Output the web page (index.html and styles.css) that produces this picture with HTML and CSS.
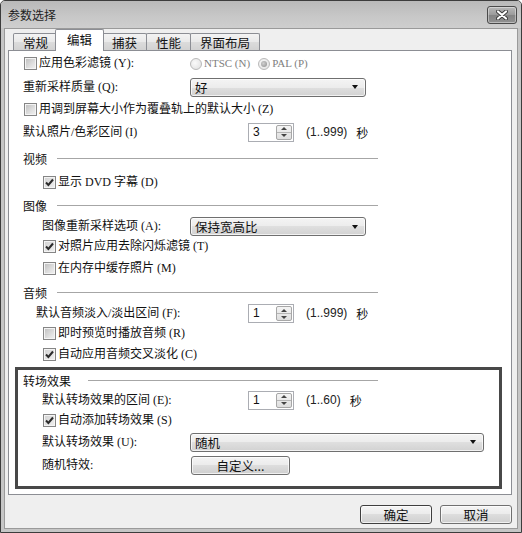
FILE: index.html
```html
<!DOCTYPE html>
<html lang="zh-CN">
<head>
<meta charset="utf-8">
<title>参数选择</title>
<link rel="stylesheet" href="styles.css">
</head>
<body>
<div class="window">
  <div class="titlebar">
    <span class="title">参数选择</span>
    <span class="close">
      <svg width="12" height="10" viewBox="0 0 12 10">
        <path d="M2 1.5 L10 8.5 M10 1.5 L2 8.5" stroke="#3a3a3a" stroke-width="4" stroke-linecap="round"/>
        <path d="M2 1.5 L10 8.5 M10 1.5 L2 8.5" stroke="#ffffff" stroke-width="2.2" stroke-linecap="round"/>
      </svg>
    </span>
  </div>
  <div class="client">
    <div class="tabs">
      <span class="tab">常规</span>
      <span class="tab active">编辑</span>
      <span class="tab">捕获</span>
      <span class="tab">性能</span>
      <span class="tab">界面布局</span>
    </div>
    <div class="panel">
      <div class="row h23">
        <span class="lbl w-dd cbrow"><span class="cb"></span>应用色彩滤镜 (Y):</span>
        <span class="radio"></span><span class="rtext">NTSC (N)</span>
        <span class="radio on"></span><span class="rtext">PAL (P)</span>
      </div>
      <div class="row h24">
        <span class="lbl w-dd">重新采样质量 (Q):</span>
        <span class="combo"><span class="ctext">好</span><span class="arrow"></span></span>
      </div>
      <div class="row h20">
        <span class="lbl cbrow"><span class="cb"></span>用调到屏幕大小作为覆叠轨上的默认大小 (Z)</span>
      </div>
      <div class="row h26">
        <span class="lbl w-sp">默认照片/色彩区间 (I)</span>
        <span class="spin"><span class="spin-val">3</span><span class="spin-btns"><i class="up"></i><i class="down"></i></span></span>
        <span class="range">(1..999)</span><span class="unit">秒</span>
      </div>
      <div class="row sec h26"><span class="sec-title">视频</span><span class="rule"></span></div>
      <div class="row h22">
        <span class="lbl cbrow in1"><span class="cb on"><svg width="11" height="11" viewBox="0 0 11 11"><path d="M2 5.5 L4.4 8 L9 2.5" fill="none" stroke="#2b2b2b" stroke-width="2"/></svg></span>显示 DVD 字幕 (D)</span>
      </div>
      <div class="row sec h24"><span class="sec-title">图像</span><span class="rule"></span></div>
      <div class="row h19">
        <span class="lbl w-dd in1t">图像重新采样选项 (A):</span>
        <span class="combo"><span class="ctext">保持宽高比</span><span class="arrow"></span></span>
      </div>
      <div class="row h20">
        <span class="lbl cbrow in1"><span class="cb on"><svg width="11" height="11" viewBox="0 0 11 11"><path d="M2 5.5 L4.4 8 L9 2.5" fill="none" stroke="#2b2b2b" stroke-width="2"/></svg></span>对照片应用去除闪烁滤镜 (T)</span>
      </div>
      <div class="row h24">
        <span class="lbl cbrow in1"><span class="cb"></span>在内存中缓存照片 (M)</span>
      </div>
      <div class="row sec h24"><span class="sec-title">音频</span><span class="rule"></span></div>
      <div class="row h19">
        <span class="lbl w-sp in-a">默认音频淡入/淡出区间 (F):</span>
        <span class="spin"><span class="spin-val">1</span><span class="spin-btns"><i class="up"></i><i class="down"></i></span></span>
        <span class="range">(1..999)</span><span class="unit">秒</span>
      </div>
      <div class="row h21">
        <span class="lbl cbrow in1"><span class="cb"></span>即时预览时播放音频 (R)</span>
      </div>
      <div class="row h20">
        <span class="lbl cbrow in1"><span class="cb on"><svg width="11" height="11" viewBox="0 0 11 11"><path d="M2 5.5 L4.4 8 L9 2.5" fill="none" stroke="#2b2b2b" stroke-width="2"/></svg></span>自动应用音频交叉淡化 (C)</span>
      </div>
      <div class="box">
        <div class="row sec h21"><span class="sec-title">转场效果</span><span class="rule wide-gap"></span></div>
        <div class="row h18">
          <span class="lbl w-sp in1t">默认转场效果的区间 (E):</span>
          <span class="spin"><span class="spin-val">1</span><span class="spin-btns"><i class="up"></i><i class="down"></i></span></span>
          <span class="range">(1..60)</span><span class="unit">秒</span>
        </div>
        <div class="row h22">
          <span class="lbl cbrow in1"><span class="cb on"><svg width="11" height="11" viewBox="0 0 11 11"><path d="M2 5.5 L4.4 8 L9 2.5" fill="none" stroke="#2b2b2b" stroke-width="2"/></svg></span>自动添加转场效果 (S)</span>
        </div>
        <div class="row h22">
          <span class="lbl w-dd in1t">默认转场效果 (U):</span>
          <span class="combo wide"><span class="ctext">随机</span><span class="arrow"></span></span>
        </div>
        <div class="row h24">
          <span class="lbl w-btn in1t">随机特效:</span>
          <span class="btn custom">自定义...</span>
        </div>
      </div>
    </div>
    <div class="footer">
      <span class="btn dlg default">确定</span>
      <span class="btn dlg">取消</span>
    </div>
  </div>
</div>
</body>
</html>
```

FILE: styles.css
```css
* { box-sizing: border-box; }
html, body { margin: 0; padding: 0; }
body {
  width: 522px;
  height: 533px;
  background: #ffffff;
  font-family: "Liberation Serif", "Noto Sans CJK SC", serif;
  font-size: 12px;
  color: #111111;
}
.window {
  width: 522px;
  height: 533px;
  border: 1px solid #3c3c3c;
  border-radius: 5px 5px 0 0;
  background: #c6c6c6;
  padding: 0 3px 3px 3px;
  display: flex;
  flex-direction: column;
}
.titlebar {
  height: 27px;
  flex: none;
  margin: 0 -3px;
  padding: 0 4px 0 7px;
  display: flex;
  align-items: center;
  justify-content: space-between;
  background: linear-gradient(#b9b9b9, #c8c8c8 60%, #cecece);
  border-radius: 4px 4px 0 0;
}
.title {
  font-family: "Noto Sans CJK SC", sans-serif;
  font-size: 12px;
  line-height: 14px;
  color: #1e1e1e;
}
.close {
  width: 30px;
  height: 18px;
  border: 1px solid #4a4a4a;
  border-radius: 3px;
  background: linear-gradient(#b8b8b8, #9a9a9a 50%, #838383 50%, #919191);
  box-shadow: inset 0 0 0 1px rgba(255,255,255,0.4);
  display: flex;
  align-items: center;
  justify-content: center;
}
.client {
  flex: 1;
  background: #efefef;
  border: 1px solid #9a9a9a;
  padding: 0 5px 0 3px;
  display: flex;
  flex-direction: column;
}
.tabs {
  height: 21px;
  flex: none;
  display: flex;
  align-items: flex-end;
  padding-left: 5px;
}
.tab {
  height: 17px;
  padding: 0 9px;
  border: 1px solid #8c8e94;
  border-bottom: none;
  border-radius: 2px 2px 0 0;
  margin-right: -1px;
  background: linear-gradient(#f3f3f3, #e9e9e9 50%, #dcdcdc 50%, #d2d2d2);
  font-family: "Noto Sans CJK SC", sans-serif;
  font-size: 12.5px;
  line-height: 15px;
  display: flex;
  align-items: center;
  color: #111;
}
.tab.active {
  height: 22px;
  margin: 0 -2px -1px -2px;
  padding: 0 11px 2px;
  background: #ffffff;
  position: relative;
  z-index: 1;
}
.panel {
  height: 445px;
  flex: none;
  background: #ffffff;
  border: 1px solid #8c8e94;
  padding: 1px 0 0 14px;
  display: flex;
  flex-direction: column;
}
.row {
  flex: none;
  display: flex;
  align-items: center;
  line-height: 15px;
  white-space: nowrap;
}
.h18 { height: 18px; }
.h19 { height: 19px; }
.h20 { height: 20px; }
.h21 { height: 21px; }
.h22 { height: 22px; }
.h23 { height: 23px; }
.h24 { height: 24px; }
.h26 { height: 26px; }
.lbl {
  display: flex;
  align-items: center;
  flex: none;
}
.w-dd { width: 167px; }
.w-sp { width: 225px; }
.w-btn { width: 168px; }
.cbrow { padding-left: 1px; }
.cbrow.in1 { padding-left: 20px; }
.in1t { padding-left: 19px; }
.in-a { padding-left: 13px; }
.cb {
  width: 13px;
  height: 13px;
  margin-right: 2px;
  border: 1px solid #858585;
  background: linear-gradient(135deg, #bdbdbd, #e2e2e2 65%, #f2f2f2);
  box-shadow: inset 0 0 0 1px #f4f4f4;
  display: flex;
  align-items: center;
  justify-content: center;
  flex: none;
}
.cb.on {
  background: linear-gradient(135deg, #d2d2d2, #f0f0f0);
}
.radio {
  width: 12px;
  height: 12px;
  border-radius: 50%;
  border: 1px solid #b9b9b9;
  background: radial-gradient(circle at 40% 40%, #fafafa, #dedede);
  margin-right: 2px;
  flex: none;
  display: flex;
  align-items: center;
  justify-content: center;
}
.radio.on::before {
  content: "";
  width: 6px;
  height: 6px;
  border-radius: 50%;
  background: radial-gradient(circle at 40% 40%, #d0d0d0, #8c8c8c);
}
.rtext {
  color: #7e7e7e;
  font-size: 11px;
  margin-right: 8px;
}
.combo {
  width: 176px;
  height: 19px;
  border: 1px solid #6f6f6f;
  border-radius: 3px;
  background: linear-gradient(#f4f4f4, #ececec 50%, #dfdfdf 50%, #d2d2d2);
  box-shadow: inset 0 0 0 1px rgba(255,255,255,0.7);
  display: flex;
  align-items: center;
  justify-content: space-between;
  padding: 0 7px 0 4px;
  flex: none;
}
.combo.wide { width: 294px; }
.ctext {
  font-family: "Noto Sans CJK SC", sans-serif;
  font-size: 12.5px;
  color: #111;
}
.arrow {
  width: 0;
  height: 0;
  border-left: 3.5px solid transparent;
  border-right: 3.5px solid transparent;
  border-top: 4px solid #111;
}
.spin {
  width: 46px;
  height: 19px;
  border: 1px solid #abadb3;
  background: #ffffff;
  display: flex;
  flex: none;
}
.spin-val {
  flex: 1;
  padding-left: 4px;
  font-family: "Liberation Sans", sans-serif;
  font-size: 12px;
  line-height: 17px;
  color: #111;
}
.spin-btns {
  width: 16px;
  margin: 1px 1px 1px 0;
  border: 1px solid #a7a7a7;
  border-radius: 2px;
  background: linear-gradient(#f4f4f4, #dedede);
  display: flex;
  flex-direction: column;
}
.spin-btns i {
  flex: 1;
  display: flex;
  align-items: center;
  justify-content: center;
}
.spin-btns i.up { border-bottom: 1px solid #b5b5b5; }
.spin-btns i.up::before {
  content: "";
  border-left: 3px solid transparent;
  border-right: 3px solid transparent;
  border-bottom: 3px solid #444;
}
.spin-btns i.down::before {
  content: "";
  border-left: 3px solid transparent;
  border-right: 3px solid transparent;
  border-top: 3px solid #444;
}
.range {
  margin-left: 12px;
  font-family: "Liberation Sans", sans-serif;
  font-size: 12px;
  color: #222;
}
.unit {
  margin-left: 9px;
  font-family: "Noto Sans CJK SC", sans-serif;
}
.sec { width: 355px; }
.sec-title {
  font-family: "Noto Sans CJK SC", sans-serif;
}
.rule {
  flex: 1;
  height: 1px;
  margin-left: 10px;
  background: #a6a6a6;
}
.rule.wide-gap { margin-left: 17px; }
.box {
  flex: none;
  margin: 3px 9px 0 -8px;
  border: 3px solid #484848;
  padding: 0 0 9px 5px;
  display: flex;
  flex-direction: column;
}
.btn {
  height: 19px;
  border: 1px solid #707070;
  border-radius: 3px;
  background: linear-gradient(#f4f4f4, #ebebeb 50%, #dddddd 50%, #cfcfcf);
  box-shadow: inset 0 0 0 1px rgba(255,255,255,0.7);
  font-family: "Noto Sans CJK SC", sans-serif;
  font-size: 12.5px;
  line-height: 15px;
  color: #111;
  display: flex;
  align-items: center;
  justify-content: center;
  flex: none;
}
.btn.custom { width: 99px; }
.footer {
  display: flex;
  justify-content: flex-end;
  gap: 8px;
  padding-top: 10px;
}
.btn.dlg { width: 72px; }
.btn.default { border-color: #3f3f3f; }
```
